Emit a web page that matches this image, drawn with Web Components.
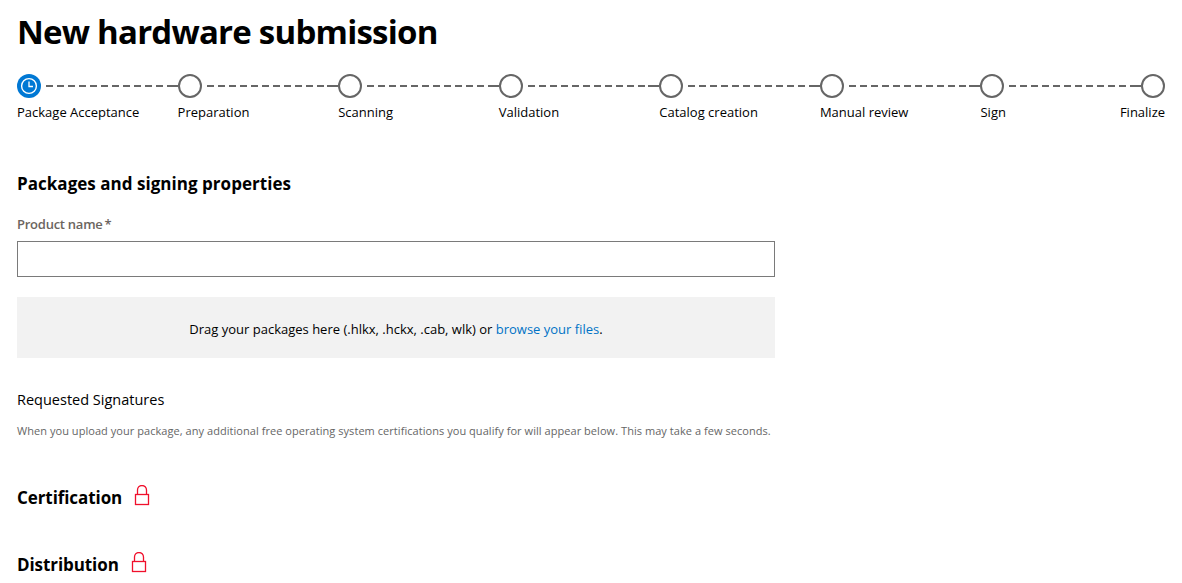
<!DOCTYPE html>
<html lang="en">
<head>
<meta charset="utf-8">
<title>New hardware submission</title>
<style>
  html, body { margin: 0; background: #fff; }
  body { font-family: "Open Sans", "Noto Sans", sans-serif; color: #000; overflow: hidden; height: 583px; }
</style>
</head>
<body>
<hw-submission-page>
  <hw-stepper slot="stepper">
    <hw-step active label="Package Acceptance"></hw-step>
    <hw-step label="Preparation"></hw-step>
    <hw-step label="Scanning"></hw-step>
    <hw-step label="Validation"></hw-step>
    <hw-step label="Catalog creation"></hw-step>
    <hw-step label="Manual review"></hw-step>
    <hw-step label="Sign"></hw-step>
    <hw-step last label="Finalize"></hw-step>
  </hw-stepper>
  <hw-text-field slot="name" label="Product name"></hw-text-field>
  <hw-dropzone slot="drop">Drag your packages here (.hlkx, .hckx, .cab, wlk) or <a href="#">browse your files</a>.</hw-dropzone>
  <hw-locked-heading slot="cert">Certification</hw-locked-heading>
  <hw-locked-heading slot="dist">Distribution</hw-locked-heading>
</hw-submission-page>

<script>
class HwSubmissionPage extends HTMLElement {
  constructor() {
    super();
    this.attachShadow({ mode: "open" });
  }

  connectedCallback() {
    this.shadowRoot.innerHTML = `
      <style>
        :host { display: block; padding: 0 17px; }
        h1 { margin: 0; padding-top: 10px; font-size: 33px; line-height: 44px; font-weight: 700; letter-spacing: -0.77px; }
        .stepper { padding-top: 20px; }
        h2 { margin: 0; padding-top: 51px; font-size: 17px; line-height: 24px; font-weight: 700; letter-spacing: 0.03px; }
        .field { padding-top: 19px; width: 758px; }
        .drop { padding-top: 20px; width: 758px; }
        h3 { margin: 0; padding-top: 32px; font-size: 14.5px; line-height: 20px; font-weight: 400; letter-spacing: 0; }
        p { margin: 0; padding-top: 14px; font-size: 11px; line-height: 14px; color: #666; letter-spacing: 0.05px; }
        .cert { padding-top: 46px; }
        .dist { padding-top: 41px; }
      </style>
      <h1>New hardware submission</h1>
      <div class="stepper"><slot name="stepper"></slot></div>
      <h2>Packages and signing properties</h2>
      <div class="field"><slot name="name"></slot></div>
      <div class="drop"><slot name="drop"></slot></div>
      <h3>Requested Signatures</h3>
      <p>When you upload your package, any additional free operating system certifications you qualify for will appear below. This may take a few seconds.</p>
      <div class="cert"><slot name="cert"></slot></div>
      <div class="dist"><slot name="dist"></slot></div>
    `;
  }
}

class HwStepper extends HTMLElement {
  constructor() {
    super();
    this.attachShadow({ mode: "open" });
  }

  connectedCallback() {
    this.shadowRoot.innerHTML = `
      <style>
        :host { display: flex; width: 1148px; }
      </style>
      <slot></slot>
    `;
  }
}

class HwStep extends HTMLElement {
  constructor() {
    super();
    this.attachShadow({ mode: "open" });
  }

  connectedCallback() {
    const clock = `
      <svg width="24" height="24" viewBox="0 0 24 24">
        <circle cx="12" cy="12" r="12" fill="#0078d4"/>
        <circle cx="12" cy="12" r="7.4" fill="none" stroke="#fff" stroke-width="1.4"/>
        <path d="M12 7.6V12.5H16" fill="none" stroke="#fff" stroke-width="1.3"/>
      </svg>`;
    const ring = `
      <svg width="24" height="24" viewBox="0 0 24 24">
        <circle cx="12" cy="12" r="11" fill="#fff" stroke="#666" stroke-width="2"/>
      </svg>`;
    // dashes run up to a short solid stub in front of the next circle
    const line = this.hasAttribute("last") ? "" : `
      <svg class="line" height="2">
        <line x1="0" y1="1" x2="100%" y2="1" stroke="#666" stroke-width="2" stroke-dasharray="7 4"/>
      </svg>
      <div class="stub"></div>`;
    this.shadowRoot.innerHTML = `
      <style>
        :host { display: block; flex: 1 1 0; min-width: 0; }
        :host([last]) { flex: 0 0 24px; }
        .track { display: flex; align-items: center; height: 24px; }
        .track svg { flex: none; display: block; }
        .track svg.line { flex: 1 1 0; min-width: 0; margin-left: 5px; }
        .stub { flex: none; width: 11px; height: 2px; background: #666; }
        .label { display: flex; padding-top: 5px; font-size: 13px; line-height: 18px; white-space: nowrap; letter-spacing: 0; }
        :host([last]) .label { justify-content: flex-end; }
      </style>
      <div class="track">${this.hasAttribute("active") ? clock : ring}${line}</div>
      <div class="label"><span>${this.getAttribute("label")}</span></div>
    `;
  }
}

class HwTextField extends HTMLElement {
  constructor() {
    super();
    this.attachShadow({ mode: "open" });
  }

  connectedCallback() {
    this.shadowRoot.innerHTML = `
      <style>
        :host { display: block; }
        label { display: block; font-size: 13px; line-height: 18px; font-weight: 600; color: #6b6560; letter-spacing: -0.25px; margin-bottom: 8px; }
        span { margin-left: 2px; }
        input { display: block; box-sizing: border-box; width: 100%; height: 36px; margin: 0; border: 1px solid #7a7a7a; background: #fff; outline: none; border-radius: 0; }
      </style>
      <label>${this.getAttribute("label")}<span>*</span></label>
      <input type="text">
    `;
  }
}

class HwDropzone extends HTMLElement {
  constructor() {
    super();
    this.attachShadow({ mode: "open" });
  }

  connectedCallback() {
    this.shadowRoot.innerHTML = `
      <style>
        :host { display: flex; align-items: center; justify-content: center; box-sizing: border-box; height: 61px; padding-top: 2px; background: #f2f2f2; font-size: 13px; letter-spacing: 0; }
        ::slotted(a) { color: #0072c6; text-decoration: none; }
      </style>
      <div><slot></slot></div>
    `;
  }
}

class HwLockedHeading extends HTMLElement {
  constructor() {
    super();
    this.attachShadow({ mode: "open" });
  }

  connectedCallback() {
    this.shadowRoot.innerHTML = `
      <style>
        :host { display: flex; align-items: center; gap: 12px; height: 26px; font-size: 17px; font-weight: 700; letter-spacing: -0.08px; }
        svg { display: block; margin-top: -4px; }
      </style>
      <div><slot></slot></div>
      <svg width="16" height="21" viewBox="0 0 16 21">
        <path d="M3.5 9V5a4.5 4.5 0 0 1 9 0v4" fill="none" stroke="#f0102c" stroke-width="1.3"/>
        <rect x="1.5" y="9.5" width="13" height="10" fill="none" stroke="#f0102c" stroke-width="1.3"/>
      </svg>
    `;
  }
}

customElements.define("hw-submission-page", HwSubmissionPage);
customElements.define("hw-stepper", HwStepper);
customElements.define("hw-step", HwStep);
customElements.define("hw-text-field", HwTextField);
customElements.define("hw-dropzone", HwDropzone);
customElements.define("hw-locked-heading", HwLockedHeading);
</script>
</body>
</html>
